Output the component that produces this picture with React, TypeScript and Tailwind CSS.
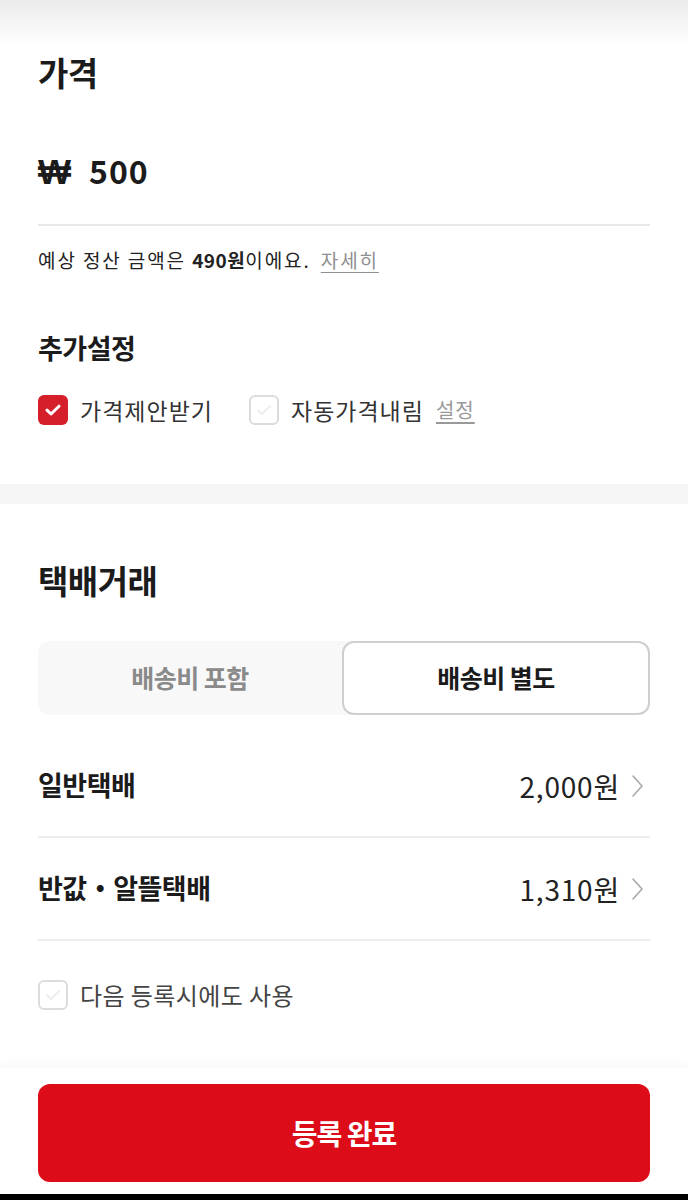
import React from "react";

const font = { fontFamily: '"Noto Sans CJK KR", "Noto Sans", sans-serif' };

function Check({ on }: { on?: boolean }) {
  return (
    <span
      className={
        on
          ? "flex h-[30px] w-[30px] shrink-0 items-center justify-center rounded-[6px] bg-[#d51f2b]"
          : "flex h-[30px] w-[30px] shrink-0 items-center justify-center rounded-[6px] border-2 border-[#dcdcdc] bg-white"
      }
    >
      <svg width="16" height="12" viewBox="0 0 16 12" fill="none">
        <path
          d="M2 6.2l4 3.8L14 2.2"
          stroke={on ? "#ffffff" : "#ededed"}
          strokeWidth={on ? 3 : 2}
          strokeLinecap="round"
          strokeLinejoin="round"
        />
      </svg>
    </span>
  );
}

function Chevron() {
  return (
    <svg width="16" height="24" viewBox="0 0 16 24" fill="none" className="ml-[10px] mr-[4px]">
      <path d="M3 2l9 10-9 10" stroke="#a8a8a8" strokeWidth="1.6" strokeLinecap="round" strokeLinejoin="round" />
    </svg>
  );
}

function ShipRow({ label, price }: { label: string; price: string }) {
  return (
    <div className="flex h-[103px] items-center justify-between border-b-2 border-[#ececec]">
      <span className="text-[27px] font-bold tracking-[-0.5px] text-[#1b1b1b]">{label}</span>
      <div className="flex items-center">
        <span className="text-[28px] tracking-[0.8px] text-[#222]">{price}</span>
        <Chevron />
      </div>
    </div>
  );
}

export default function App() {
  return (
    <div style={font} className="flex h-[1200px] w-full flex-col overflow-hidden bg-white text-[#1b1b1b]">
      <div className="h-[46px] bg-gradient-to-b from-[#ebebeb] to-white" />

      <div className="px-[38px]">
        <h2 className="mt-[6px] text-[33px] font-bold leading-[40px] tracking-[-0.5px]">가격</h2>

        <div className="mt-[58px] box-content flex h-[40px] items-baseline border-b-2 border-[#e8e8e8] pb-[34px]">
          <span className="text-[35px] font-bold leading-[40px] [font-family:'Liberation_Sans',sans-serif]">₩</span>
          <span className="ml-[18px] text-[32px] font-bold leading-[40px] tracking-[1px]">500</span>
        </div>

        <p className="mt-[21px] text-[19px] leading-[26px] tracking-[1.9px] text-[#222]">
          예상 정산 금액은 <b className="font-bold tracking-[0.5px]">490원</b>이에요.{" "}
          <span className="ml-[4px] text-[#8f8f8f] underline underline-offset-4">자세히</span>
        </p>

        <h3 className="mt-[58px] text-[27px] font-bold leading-[34px] tracking-[-0.5px]">추가설정</h3>

        <div className="mt-[30px] flex h-[30px] items-center">
          <Check on />
          <span className="ml-[12px] text-[23px] tracking-[1px] text-[#333]">가격제안받기</span>
          <span className="ml-[36px]">
            <Check />
          </span>
          <span className="ml-[12px] text-[23px] tracking-[1px] text-[#333]">자동가격내림</span>
          <span className="ml-[12px] text-[20px] tracking-[1px] text-[#999] underline underline-offset-4">설정</span>
        </div>
      </div>

      <div className="mt-[59px] h-[20px] bg-[#f5f5f5]" />

      <div className="px-[38px]">
        <h2 className="mt-[56px] text-[33px] font-bold leading-[40px] tracking-[-0.5px]">택배거래</h2>

        <div className="mt-[41px] flex h-[74px] rounded-[12px] bg-[#f8f8f8]">
          <div className="flex flex-1 items-center justify-center text-[25px] font-bold tracking-[-0.5px] text-[#8a8a8a]">
            배송비 포함
          </div>
          <div className="flex flex-1 items-center justify-center rounded-[12px] border-2 border-[#cfcfcf] bg-white text-[25px] font-bold tracking-[-0.5px] text-[#1b1b1b]">
            배송비 별도
          </div>
        </div>

        <div className="mt-[20px]">
          <ShipRow label="일반택배" price="2,000원" />
          <ShipRow label="반값・알뜰택배" price="1,310원" />
        </div>

        <div className="mt-[39px] flex h-[30px] items-center">
          <Check />
          <span className="ml-[12px] text-[24px] tracking-[0.4px] text-[#444]">다음 등록시에도 사용</span>
        </div>
      </div>

      <div className="flex-1" />

      <div className="bg-white px-[38px] pb-[12px] pt-[16px] shadow-[0_-6px_10px_rgba(0,0,0,0.025)]">
        <button className="flex h-[98px] w-full items-center justify-center rounded-[12px] bg-[#dc0d19] text-[28px] font-bold tracking-[-1px] text-white">
          등록 완료
        </button>
      </div>
      <div className="h-[6px] bg-black" />
    </div>
  );
}
